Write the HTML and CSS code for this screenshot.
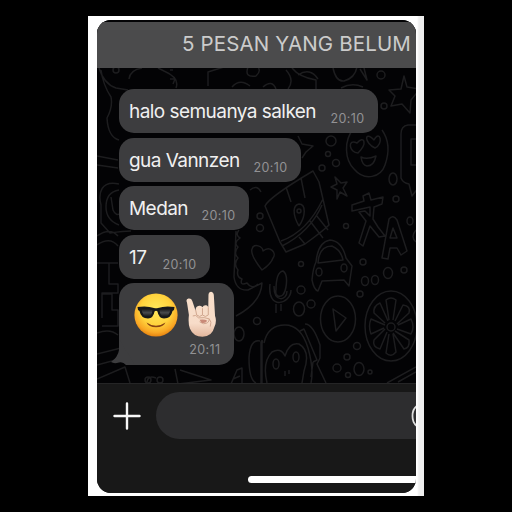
FILE: index.html
```html
<!DOCTYPE html>
<html lang="id">
<head>
<meta charset="utf-8">
<title>Chat</title>
<link rel="stylesheet" href="styles.css">
</head>
<body>
<main class="frame">
<div class="phone">
  <section class="chat">
    <svg class="wallpaper" viewBox="97 20 319 363" aria-hidden="true">
      <!-- left edge -->
      <path d="M99 68Q104 84 116 88L128 90M129 79Q130 70 142 68M158 68L164 71Q180 78 176 88M208 86V72L227 66M101 70Q103 85 111 97Q113 107 107 118Q108 137 119 140M97 156L118 160M97 165L118 168M119 184C101 180 98 193 101 205V223L110 233Q124 231 131 231M119 190Q106 192 106 207Q106 220 119 225M111 197L113 210Q116 217 121 213M97 236Q110 227 118 236M97 245Q110 236 118 246M97 263H118M109 263V284H118V293H102V318M102 294H112V310H118V326H102M97 333Q110 328 118 335M97 354L121 348M97 365L123 358M97 379L125 367L130 383M147 382Q148 375 156 378M175 369L178 384L211 380L180 370M231 384L237 370L242 368V383M240 376L233 379M170 70h3M170 79h5l-2 5"/>
      <circle cx="116" cy="70" r="3"/><circle cx="148" cy="380" r="3"/><circle cx="160" cy="380" r="3"/>
      <!-- top row -->
      <path d="M248 67Q244 78 256 76Q262 71 257 65M232 87Q240 78 250 86M263 87Q272 79 276 89M286 70Q295 80 288 89M292 68Q299 77 316 80V89M298 75Q310 67 318 79M333 68Q336 82 344 81Q355 78 357 67M360 69L367 80L364 68M341 88Q352 82 363 87"/>
      <circle cx="381" cy="75" r="4"/><circle cx="384" cy="106" r="3"/>
      <path d="M404 76L407 87L420 89L411 100L410 113L402 104L391 106L395 96L389 90L401 89Z"/>
      <!-- face with heart eyes -->
      <path d="M354 128C343 141 345 160 354 169C365 182 381 177 385 165C391 148 387 137 382 130M357 143C347 138 349 153 358 153C368 143 364 135 357 143ZM374 140C364 130 364 143 375 148C384 144 380 129 374 140ZM361 157Q367 160 376 156Q374 166 367 166Q362 165 361 157Z"/>
      <path d="M298 136L302 144L313 146L306 152L302 158M420 125H408Q401 126 401 134V178Q403 183 409 184L412 196L418 188M416 139H411V165H416"/>
      <circle cx="331" cy="141" r="5"/><circle cx="328" cy="154" r="2.5"/><circle cx="336" cy="163" r="3.5"/><circle cx="322" cy="168" r="3"/><ellipse cx="393" cy="179" rx="4" ry="6"/>
      <path d="M335 177L341 183L347 182L343 188L347 196L340 192L337 199L337 190L331 187L337 184Z"/>
      <!-- map -->
      <path d="M265 206Q269 197 313 171L319 182L329 225Q323 231 305 244L286 252L280 242Z M281 241Q307 232 323 199M282 246Q310 232 322 205M310 221L323 238M316 215L328 230M299 226C292 214 293 205 299 204C306 204 306 216 299 226M286 187L291 202M301 178L305 198M299 237L305 244"/>
      <circle cx="299" cy="211" r="2"/><circle cx="260" cy="216" r="3"/><circle cx="260" cy="228" r="3.5"/>
      <path d="M250 190Q257 184 261 192"/>
      <!-- letters -->
      <path d="M363 196L369 193L371 200L383 197L382 204L374 207L373 219L378 227L385 236L379 237L370 226L363 246L359 243L366 221L359 212L365 211L370 216V207L352 211V205L364 201ZM382 258L389 219Q393 214 397 220L407 251L401 255L397 248H390L388 259ZM390 238L393 228L397 238Z"/>
      <circle cx="396" cy="199" r="3"/><circle cx="346" cy="226" r="2.5"/><ellipse cx="410" cy="221" rx="3" ry="4"/><path d="M416 230Q410 237 416 242"/>
      <!-- heart, mic, car -->
      <path d="M262 270Q250 255 252 249C254 242 263 247 263 251C270 245 277 253 273 258Q271 264 262 270ZM276 290Q276 272 283 271Q288 274 286 287Q284 298 278 296Q275 295 276 290M270 284C267 311 291 304 291 290M274 286C274 303 287 301 287 291M276 304V313M281 304V311"/>
      <path d="M316 262Q313 268 312 280Q314 290 318 291L322 281L344 280L349 286L352 266L346 258Q342 241 330 240Q318 242 316 262ZM318 263Q319 246 332 246Q341 250 343 260Z"/>
      <ellipse cx="319" cy="272" rx="3" ry="4"/><ellipse cx="344" cy="268" rx="3" ry="4"/>
      <path d="M236 231L234 277Q236 291 248 290L262 283Q261 303 236 316M239 230Q235 235 240 238Q233 243 238 247Q233 253 238 258Q233 264 238 270Q236 277 242 279Q239 286 247 283Q252 290 258 284"/>
      <circle cx="301" cy="264" r="2.5"/><circle cx="301" cy="290" r="4"/><ellipse cx="299" cy="309" rx="5.5" ry="7"/><circle cx="311" cy="304" r="4"/><circle cx="257" cy="321" r="3.5"/><ellipse cx="239" cy="334" rx="5" ry="7"/>
      <circle cx="363" cy="262" r="3"/><ellipse cx="365" cy="281" rx="3.5" ry="4.5"/><ellipse cx="375" cy="280" rx="3.5" ry="4.5"/><ellipse cx="388" cy="273" rx="4.5" ry="5.5"/><circle cx="404" cy="270" r="3"/><circle cx="360" cy="294" r="3"/>
      <!-- play button -->
      <ellipse cx="338" cy="319" rx="17.500" ry="23"/><path d="M333 309L346 318L336 331Z"/>
      <!-- citrus slice -->
      <ellipse cx="391" cy="326" rx="26" ry="35"/><circle cx="391" cy="327" r="4"/>
      <path d="M389 320L386 300Q391 296 396 300L393 320M395 321L403 305Q411 306 409 313L397 324M398 325L411 319Q415 327 411 334L397 329M395 331L409 340Q410 348 404 349L393 333M393 334L396 352Q391 358 386 353L389 334M387 332L380 349Q372 347 374 340L385 329M384 328L371 334Q368 326 371 319L385 325M385 323L374 313Q373 306 380 303L388 321"/>
      <!-- monkey -->
      <path d="M264 343Q268 325 285 325Q301 325 308 348Q314 369 311 383M267 383Q262 362 272 352Q281 347 285 356Q289 342 299 344Q311 351 304 371L302 383M261 383V342Q263 338 262 344V383M260 341Q250 339 249 358Q249 380 256 383M300 331L304 329L317 360L313 362M305 324Q313 324 320 345V358L317 364L326 383M313 362L311 377M285 371V376M289 370V374"/>
      <ellipse cx="276" cy="364" rx="3" ry="5"/><ellipse cx="296" cy="357" rx="3" ry="5"/>
      <circle cx="357" cy="346" r="3.500"/><circle cx="347" cy="357" r="3"/><circle cx="337" cy="368" r="4"/><ellipse cx="359" cy="369" rx="5" ry="6.500"/><circle cx="348" cy="375" r="2.500"/><circle cx="370" cy="372" r="2"/>
      <path d="M387 383L416 367M398 382L416 372"/>
    </svg>
    <header class="unread"><span>5 PESAN YANG BELUM</span></header>
    <div class="messages">
      <div class="bubble b1"><p>halo semuanya salken</p><time>20:10</time></div>
      <div class="bubble b2"><p>gua Vannzen</p><time>20:10</time></div>
      <div class="bubble b3"><p>Medan</p><time>20:10</time></div>
      <div class="bubble b4"><p>17</p><time>20:10</time></div>
      <div class="bubble b5">
        <svg class="tail" viewBox="0 0 24 26"><path d="M8 0V11Q7 18 0 23Q3 25 8 23.500Q12 22.500 15 26H24Z"/></svg>
        <div class="emoji">
          <svg class="cool" viewBox="0 0 44 44">
            <defs>
              <radialGradient id="skin" cx=".5" cy=".38" r=".64"><stop offset="0" stop-color="#ffe95c"/><stop offset=".55" stop-color="#ffd33d"/><stop offset=".82" stop-color="#f9a825"/><stop offset="1" stop-color="#e27b0c"/></radialGradient>
              <linearGradient id="lens" x2="0" y2="1"><stop stop-color="#111"/><stop offset=".5" stop-color="#484b4e"/><stop offset="1" stop-color="#111"/></linearGradient>
            </defs>
            <circle cx="22" cy="22" r="21.600" fill="url(#skin)"/>
            <path d="M12.500 29.500Q22 36 31.500 29.500Q29.500 34 22 34.300Q14.500 34 12.500 29.500Z" fill="#874313"/>
            <path d="M3.500 14Q13 12.500 20 15Q22 15.600 24 15Q31 12.500 40.500 14L40 17L38.500 18Q37 25.500 30 25.500Q24.500 25 23.500 18.500Q22 17 20.500 18.500Q19.500 25 14 25.500Q7 25.500 5.500 18L4 17Z" fill="#17191b"/>
            <path d="M7.500 16Q13 14.500 18.500 17Q18 23.500 13.500 24Q8.500 23.500 7.500 16ZM36.500 16Q31 14.500 25.500 17Q26 23.500 30.500 24Q35.500 23.500 36.500 16Z" fill="url(#lens)"/>
          </svg>
          <svg class="horns" viewBox="0 0 32 47">
            <defs><linearGradient id="hand" x2="0" y2="1"><stop stop-color="#f8dfca"/><stop offset=".7" stop-color="#f7dcc9"/><stop offset="1" stop-color="#e2b69c"/></linearGradient></defs>
            <path d="M1 11Q-.5 7.500 2.500 7Q5.500 6.500 6.500 9.500L10 20Q9.500 15 13.500 14.500Q16 14 17 16Q18 13.500 21 14Q22.500 14.500 23 16L23.200 3Q23.500 0 26 0Q28.500 .5 28.700 3L30 25Q32 30 29.500 36Q27 46.500 17 46.500Q7.500 46.500 4 38Q2 33 3 24Z" fill="url(#hand)"/>
            <path d="M10 19L11 24Q14 27 17 24V17M17 24Q20 27 23 24V16M7 25Q10 23 13 27Q19 26 24 28Q24 33 18 33L14 31M24 28Q27 31 25 36" fill="none" stroke="#d0a58d" stroke-width="1"/>
            <path d="M14 29Q19 28 22 30Q20 33 16 32Z" fill="#c98a78"/>
          </svg>
        </div>
        <time>20:11</time>
      </div>
    </div>
  </section>
  <footer class="composer">
    <div class="controls">
      <svg class="plus" viewBox="0 0 28 28"><path d="M14 1.500V26.500M1.500 14H26.500"/></svg>
      <div class="field"><svg viewBox="0 0 5 22"><path d="M6 1Q1.500 4 1.500 11T6 21"/></svg></div>
    </div>
    <div class="home"></div>
  </footer>
</div>
</main>
</body>
</html>
```
FILE: styles.css
```css
* { box-sizing: border-box; }
body {
  margin: 0;
  width: 512px;
  height: 512px;
  overflow: hidden;
  background: #000;
  font-family: Inter, "Liberation Sans", sans-serif;
}
p { margin: 0; }
svg { display: block; flex: none; }
.frame {
  width: 336px;
  height: 480px;
  margin: 16px 88px;
  padding: 4px 8px 3px 9px;
  background: linear-gradient(90deg, #fff 329px, #eee 331px);
}
.phone {
  height: 473px;
  overflow: hidden;
  border-radius: 14px;
  background: #181818;
}
.chat {
  position: relative;
  height: 363px;
  padding-top: 2px;
  background: #030305;
}
.wallpaper {
  position: absolute;
  inset: 0;
  width: 319px;
  height: 363px;
  fill: none;
  stroke: #1d1d1f;
  stroke-width: 1.5;
  stroke-linejoin: round;
}
.unread {
  position: relative;
  height: 46px;
  padding-left: 85px;
  background: #4b4b4c;
  color: #cbcbcb;
  font-size: 20.5px;
  letter-spacing: .15px;
  line-height: 44px;
  white-space: nowrap;
}
.messages {
  position: relative;
  display: flex;
  flex-direction: column;
  align-items: flex-start;
  gap: 4.5px;
  padding: 21px 0 0 21.5px;
}
.bubble {
  display: flex;
  justify-content: space-between;
  height: 44px;
  padding: 0 13.5px 0 10.5px;
  border-radius: 15px;
  background: #3d3d3f;
  color: #f0f0f0;
  font-size: 19px;
  letter-spacing: -.55px;
  line-height: 45px;
  white-space: nowrap;
}
time {
  color: #929294;
  font-size: 12.5px;
  line-height: 60px;
  letter-spacing: .4px;
}
.b1 { width: 259.5px; }
.b2 { width: 182.5px; }
.b3 { width: 130.5px; }
.b4 { width: 91.5px; }
.b5 {
  position: relative;
  width: 115.5px;
  height: 82px;
  flex-direction: column;
  justify-content: flex-start;
  padding: 7px 13.5px 0 15px;
}
.tail {
  position: absolute;
  left: -8px;
  bottom: 0;
  width: 24px;
  height: 26px;
  fill: #3d3d3f;
}
.emoji { display: flex; align-items: flex-end; gap: 8px; height: 48px; }
.cool { width: 44px; height: 44px; margin-bottom: 1px; }
.horns { width: 31px; height: 47px; }
.b5 time { align-self: flex-end; line-height: 24px; }
.composer {
  height: 110px;
  padding-top: 8px;
  border-top: 1px solid #252526;
  background: #181818;
}
.controls { display: flex; align-items: center; }
.plus {
  width: 28px;
  height: 28px;
  margin: 0 15.5px 0 15.5px;
  fill: none;
  stroke: #f7f7f7;
  stroke-width: 2.4;
  stroke-linecap: round;
}
.field {
  display: flex;
  align-items: center;
  justify-content: flex-end;
  flex: 1;
  height: 47px;
  border-radius: 24px 0 0 24px;
  background: #2d2d2f;
}
.field svg { width: 5px; height: 22px; fill: none; stroke: #ddd; stroke-width: 1.8; }
.home {
  width: 168px;
  height: 7px;
  margin: 37px 0 0 151px;
  border-radius: 4px 0 0 4px;
  background: #fff;
}
```
